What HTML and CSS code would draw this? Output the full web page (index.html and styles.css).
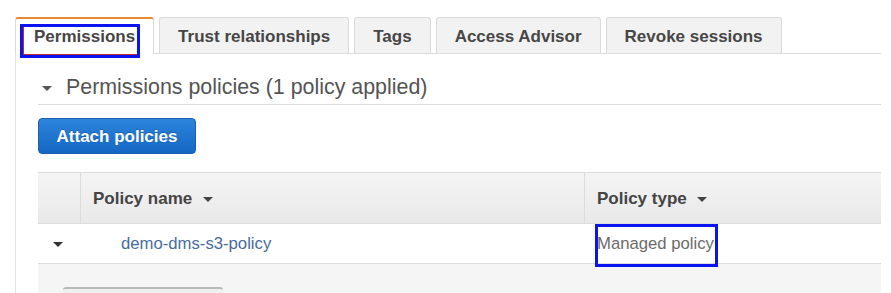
FILE: index.html
```html
<!DOCTYPE html>
<html>
<head>
<meta charset="utf-8">
<link rel="stylesheet" href="styles.css">
</head>
<body>
<div class="page">
  <div class="tabs">
    <div class="tab active">Permissions</div>
    <div class="tab">Trust relationships</div>
    <div class="tab">Tags</div>
    <div class="tab">Access Advisor</div>
    <div class="tab">Revoke sessions</div>
  </div>
  <div class="panel">
    <div class="section-head">
      <span class="caret big"></span>
      <span class="section-title">Permissions policies (1 policy applied)</span>
    </div>
    <button class="btn-primary">Attach policies</button>
    <div class="table">
      <div class="thead">
        <div class="cell c1"></div>
        <div class="cell c2">Policy name <span class="caret"></span></div>
        <div class="cell c3">Policy type <span class="caret"></span></div>
      </div>
      <div class="trow">
        <div class="cell c1"><span class="caret"></span></div>
        <div class="cell c2"><a class="link">demo-dms-s3-policy</a></div>
        <div class="cell c3 plain">Managed policy</div>
      </div>
      <div class="tfoot">
        <div class="stub"></div>
      </div>
    </div>
  </div>
  <div class="mark mark-tab"></div>
  <div class="mark mark-type"></div>
</div>
</body>
</html>
```

FILE: styles.css
```css
html, body {
  margin: 0;
  padding: 0;
  background: #fff;
}
body {
  font-family: "Liberation Sans", Arial, sans-serif;
  width: 891px;
  height: 293px;
  overflow: hidden;
}
.page {
  position: relative;
  padding: 17px 0 0 15px;
  width: 866px;
}
.tabs {
  display: flex;
  gap: 5px;
  height: 36px;
  position: relative;
  z-index: 1;
}
.tab {
  box-sizing: border-box;
  height: 36px;
  padding: 0 18px;
  border: 1px solid #dadada;
  border-bottom: none;
  border-radius: 3px 3px 0 0;
  background: #f2f2f2;
  color: #464646;
  font-weight: bold;
  font-size: 17px;
  line-height: 37px;
  white-space: nowrap;
}
.tab.active {
  background: #fff;
  border-top: 2px solid #e9892f;
  height: 37px;
  line-height: 35px;
  margin-bottom: -1px;
}
.panel {
  border-top: 1px solid #dcdcdc;
  border-left: 1px solid #e2e2e2;
  height: 240px;
  padding-left: 22px;
}
.section-head {
  display: flex;
  align-items: center;
  gap: 14px;
  padding: 21px 0 5px 4px;
  height: 24px;
  border-bottom: 1px solid #dedede;
}
.section-title {
  font-size: 21.4px;
  line-height: 24px;
  color: #545454;
}
.caret {
  display: inline-block;
  width: 0;
  height: 0;
  border-left: 5px solid transparent;
  border-right: 5px solid transparent;
  border-top: 5px solid #444;
  vertical-align: middle;
  margin-left: 6px;
}
.caret.big {
  margin-left: 0;
  margin-top: 2px;
  border-top-color: #555;
}
.btn-primary {
  display: block;
  margin-top: 13px;
  width: 158px;
  height: 36px;
  padding: 2px 0 0;
  border: 1px solid #1a5fa8;
  border-radius: 4px;
  background: linear-gradient(#2d85dc, #1467c3);
  color: #fff;
  font-family: "Liberation Sans", Arial, sans-serif;
  font-weight: bold;
  font-size: 17px;
  text-shadow: 0 -1px 0 rgba(0,0,0,0.2);
}
.table {
  margin-top: 18px;
  width: 843px;
}
.thead, .trow {
  display: grid;
  grid-template-columns: 42px 504px 297px;
}
.thead {
  height: 50px;
  border-top: 1px solid #dcdcdc;
  border-bottom: 1px solid #dcdcdc;
  background: linear-gradient(#f4f4f4, #e9e9e9);
}
.thead .cell {
  font-weight: bold;
  font-size: 17px;
  color: #444;
  line-height: 51px;
  padding-left: 12px;
}
.thead .c1 {
  padding-left: 0;
}
.thead .c2, .thead .c3 {
  border-left: 1px solid #dcdcdc;
}
.trow {
  height: 39px;
  border-bottom: 1px solid #dedede;
  background: #fff;
}
.trow .cell {
  font-size: 16.7px;
  line-height: 40px;
}
.trow .c1 {
  display: flex;
  justify-content: center;
  align-items: center;
}
.trow .c1 .caret {
  margin-left: -2px;
  border-top-color: #333;
}
.trow .c2 {
  padding-left: 41px;
}
.trow .c3 {
  padding-left: 13px;
}
.link {
  color: #466ba0;
}
.plain {
  color: #6b6b6b;
}
.tfoot {
  height: 40px;
  background: #f5f5f5;
  padding-left: 25px;
  padding-top: 23px;
  box-sizing: border-box;
}
.stub {
  width: 160px;
  height: 10px;
  border-top: 2px solid #b9b9b9;
  border-radius: 3px 3px 0 0;
  background: #efefef;
}
.mark {
  position: absolute;
  box-sizing: border-box;
  border: 3px solid #0a14f0;
  z-index: 2;
}
.mark-tab {
  left: 20px;
  top: 24px;
  width: 120px;
  height: 34px;
  box-shadow: inset 1px -1px 0 #c62828;
}
.mark-type {
  left: 595px;
  top: 224px;
  width: 123px;
  height: 43px;
}
```
